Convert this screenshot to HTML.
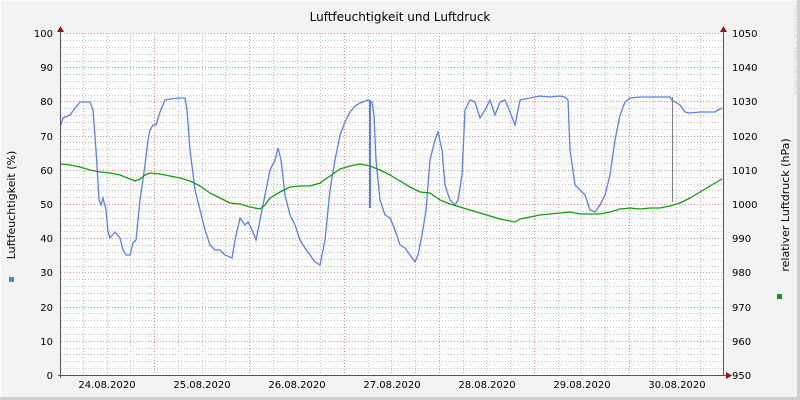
<!DOCTYPE html>
<html><head><meta charset="utf-8"><style>
html,body{margin:0;padding:0;background:#f3f3f3}
svg{display:block;font-family:"DejaVu Sans","Liberation Sans",sans-serif}
</style></head><body>
<svg width="800" height="400" viewBox="0 0 800 400" xmlns="http://www.w3.org/2000/svg">
<rect x="0" y="0" width="800" height="400" fill="#f3f3f3"/>
<rect x="0" y="0" width="798" height="398" fill="none" stroke="#fcfcfc" stroke-width="2"/>
<line x1="798.5" y1="0" x2="798.5" y2="400" stroke="#cfcfcf" stroke-width="3"/>
<line x1="0" y1="398.5" x2="800" y2="398.5" stroke="#cfcfcf" stroke-width="3"/>
<rect x="61" y="33" width="662" height="342" fill="#ffffff"/>
<g stroke="#c4c4c4" stroke-width="1" stroke-dasharray="1,2" shape-rendering="crispEdges">
<path d="M61 40.5H723M61 47.5H723M61 54.5H723M61 61.5H723M61 74.5H723M61 81.5H723M61 88.5H723M61 95.5H723M61 108.5H723M61 115.5H723M61 122.5H723M61 129.5H723M61 142.5H723M61 149.5H723M61 156.5H723M61 163.5H723M61 177.5H723M61 184.5H723M61 190.5H723M61 197.5H723M61 211.5H723M61 218.5H723M61 225.5H723M61 231.5H723M61 245.5H723M61 252.5H723M61 259.5H723M61 266.5H723M61 279.5H723M61 286.5H723M61 293.5H723M61 300.5H723M61 313.5H723M61 320.5H723M61 327.5H723M61 334.5H723M61 348.5H723M61 354.5H723M61 361.5H723M61 368.5H723"/>
<path d="M83.5 33V375M107.5 33V375M130.5 33V375M178.5 33V375M202.5 33V375M225.5 33V375M273.5 33V375M297.5 33V375M320.5 33V375M368.5 33V375M391.5 33V375M415.5 33V375M463.5 33V375M486.5 33V375M510.5 33V375M558.5 33V375M581.5 33V375M605.5 33V375M653.5 33V375M676.5 33V375M700.5 33V375"/>
</g>
<g stroke="#e09090" stroke-width="1" stroke-dasharray="1,2" shape-rendering="crispEdges">
<path d="M61 33.5H723M61 67.5H723M61 101.5H723M61 136.5H723M61 170.5H723M61 204.5H723M61 238.5H723M61 272.5H723M61 307.5H723M61 341.5H723"/>
<path d="M154.5 33V375M249.5 33V375M344.5 33V375M439.5 33V375M534.5 33V375M629.5 33V375"/>
</g>
<polyline fill="none" stroke="#5a7fe8" stroke-width="1.3" points="61,125 63,118 70,115 75,108 80,102 90,102 93,110 96,150 99,200 101,205 103,198 106,210 108,232 110,238 115,232 120,238 123,250 126,255 130,255 133,243 136,240 140,200 145,165 148,140 150,130 153,125 156,125 160,112 165,100 170,99 180,98 185,98 187,110 190,150 195,190 200,210 205,230 210,245 215,250 220,250 225,255 232,258 235,240 240,218 245,225 248,222 252,230 256,240 260,220 265,195 270,170 275,160 278,148 281,160 285,195 290,215 295,225 300,240 305,248 310,255 315,262 320,265 325,240 330,190 335,160 340,135 345,122 350,112 355,106 360,103 368,100 372,102 374,115 376,160 380,200 385,215 390,218 395,230 400,245 405,248 410,255 415,262 418,255 422,235 426,210 430,160 435,140 438,132 442,150 445,185 450,200 455,205 458,200 462,175 465,110 470,100 475,102 480,118 485,110 490,100 495,115 500,102 505,100 510,112 515,125 520,100 530,98 540,96 550,97 560,96 565,97 568,100 570,150 575,185 580,190 585,195 590,210 595,212 600,205 605,195 610,175 615,140 620,115 625,102 630,98 640,97 660,97 670,97 672,100 680,105 685,112 690,113 700,112 715,112 718,110 722,108"/>
<line x1="370" y1="100" x2="370" y2="208" stroke="#5a7fe8" stroke-width="2"/>
<line x1="672.5" y1="97" x2="672.5" y2="202" stroke="#808080" stroke-width="1"/>
<polyline fill="none" stroke="#139a13" stroke-width="1.3" points="61,164 70,165 80,167 90,170 100,172 110,173 120,175 130,179 135,181 140,179 145,175 150,173 160,174 170,176 180,178 190,181 200,186 210,193 220,198 230,203 240,204 250,207 260,209 265,205 270,198 280,192 290,187 300,186 310,186 320,183 330,176 340,169 350,166 360,164 370,166 380,170 390,175 400,181 410,187 420,192 430,193 440,200 450,204 460,207 470,210 480,213 490,216 500,219 510,221 515,222 520,219 530,217 540,215 550,214 560,213 570,212 580,214 590,214 600,214 610,212 620,209 630,208 640,209 650,208 660,208 670,206 680,203 690,198 700,192 710,186 722,179"/>
<line x1="60.5" y1="30" x2="60.5" y2="378" stroke="#555" stroke-width="1"/>
<line x1="723.5" y1="30" x2="723.5" y2="375" stroke="#555" stroke-width="1"/>
<line x1="58" y1="375.5" x2="726" y2="375.5" stroke="#555" stroke-width="1"/>
<path d="M57 32L60.5 26L64 32Z" fill="#8b1a1a"/>
<path d="M720 32L723.5 26L727 32Z" fill="#8b1a1a"/>
<path d="M726 372L732 375.5L726 379Z" fill="#8b1a1a"/>
<g font-size="10" fill="#000" text-anchor="end">
<text x="53" y="37">100</text><text x="53" y="71">90</text><text x="53" y="105">80</text><text x="53" y="140">70</text><text x="53" y="174">60</text><text x="53" y="208">50</text><text x="53" y="242">40</text><text x="53" y="276">30</text><text x="53" y="311">20</text><text x="53" y="345">10</text><text x="53" y="379">0</text>
</g>
<g font-size="10" fill="#000">
<text x="732" y="37">1050</text><text x="732" y="71">1040</text><text x="732" y="105">1030</text><text x="732" y="140">1020</text><text x="732" y="174">1010</text><text x="732" y="208">1000</text><text x="732" y="242">990</text><text x="732" y="276">980</text><text x="732" y="311">970</text><text x="732" y="345">960</text><text x="732" y="379">950</text>
</g>
<g font-size="10" fill="#000" text-anchor="middle">
<text x="107" y="388">24.08.2020</text><text x="202" y="388">25.08.2020</text><text x="297" y="388">26.08.2020</text><text x="392" y="388">27.08.2020</text><text x="487" y="388">28.08.2020</text><text x="582" y="388">29.08.2020</text><text x="677" y="388">30.08.2020</text>
</g>
<text x="400" y="21" font-size="12" text-anchor="middle" fill="#000">Luftfeuchtigkeit und Luftdruck</text>
<text transform="translate(15,205) rotate(-90)" font-size="11" text-anchor="middle" fill="#000">Luftfeuchtigkeit (%)</text>
<text transform="translate(789,205) rotate(-90)" font-size="11" text-anchor="middle" fill="#000">relativer Luftdruck (hPa)</text>
<rect x="9" y="277" width="5" height="5" fill="#5a7fe8"/>
<rect x="777" y="294" width="5" height="5" fill="#139a13"/>
<text transform="translate(794,5) rotate(90)" font-size="7" fill="#d0d0d0">RRDTOOL / TOBI OETIKER</text>
</svg>
</body></html>
